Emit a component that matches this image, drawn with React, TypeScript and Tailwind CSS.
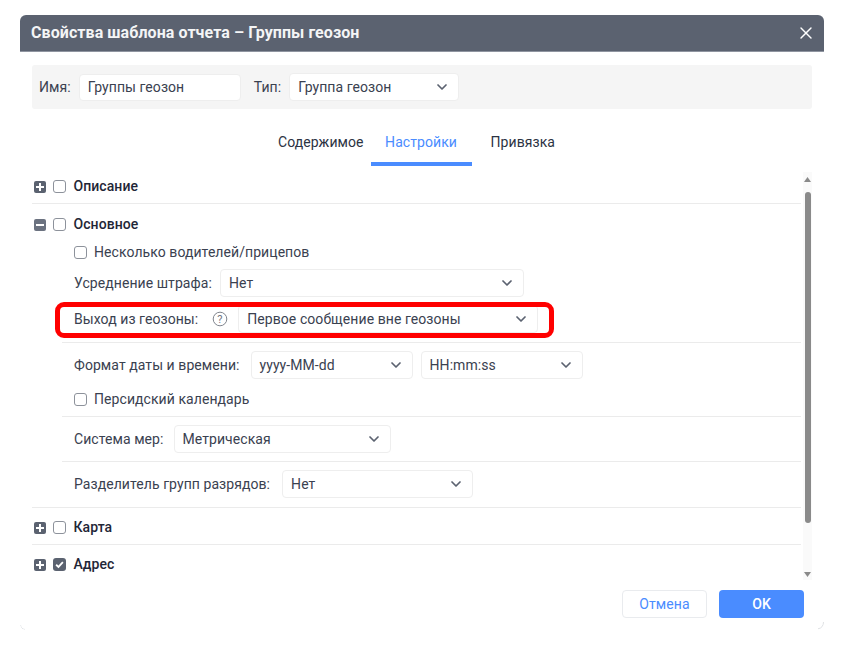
import { ChevronDown, X } from 'lucide-react';

const labelText = 'text-[14px] leading-[20px] text-[#3a4150] whitespace-nowrap';

const Select = ({ value, width }: { value: string; width: string }) => (
  <div
    className={`${width} h-[28px] flex items-center justify-between pl-[8px] pr-[8px] bg-white border border-[#eeeeee] rounded-[4px] text-[14px] text-[#3a4150] shrink-0`}
  >
    <span className="whitespace-nowrap">{value}</span>
    <ChevronDown className="w-[16px] h-[16px] text-[#5b6270]" strokeWidth={2.6} />
  </div>
);

const Checkbox = ({ checked = false }: { checked?: boolean }) =>
  checked ? (
    <div className="w-[13px] h-[13px] rounded-[3px] bg-[#5b6270] flex items-center justify-center shrink-0">
      <svg width="9" height="9" viewBox="0 0 8 8" fill="none">
        <path d="M1 4.2 3.1 6.2 7 1.9" stroke="#fff" strokeWidth="1.6" />
      </svg>
    </div>
  ) : (
    <div className="w-[13px] h-[13px] rounded-[3px] border border-[#8d929b] bg-white shrink-0" />
  );

const Toggle = ({ open = false }: { open?: boolean }) => (
  <div
    className={`w-[12px] h-[12px] rounded-[2px] relative shrink-0 ${open ? 'bg-[#6b7280]' : 'bg-[#5b6270]'}`}
  >
    <div className="absolute left-[2px] top-[5px] w-[8px] h-[2px] bg-white" />
    {!open && <div className="absolute left-[5px] top-[2px] w-[2px] h-[8px] bg-white" />}
  </div>
);

const SectionHeader = ({
  title,
  open,
  checked,
}: {
  title: string;
  open?: boolean;
  checked?: boolean;
}) => (
  <div className="flex items-center h-[20px] pl-[2px]">
    <div className="flex items-center mt-[1px]">
      <Toggle open={open} />
      <div className="ml-[7px]">
        <Checkbox checked={checked} />
      </div>
    </div>
    <span className="ml-[7.5px] text-[14px] font-medium text-[#1f2637]">{title}</span>
  </div>
);

const Divider = () => <div className="h-[1px] bg-[#ebebeb]" />;

export default function App() {
  return (
    <div
      className="w-[842px] h-[645px] bg-white overflow-hidden pt-[15px] pl-[20px] tracking-[0.07px]"
      style={{ fontFamily: 'Roboto, sans-serif' }}
    >
      <div className="relative w-[804px] h-[615px] bg-white rounded-[6px] flex flex-col overflow-hidden">
        <div className="h-[37px] bg-[#5b6270] border-b border-[#8f95a0] flex items-center justify-between pl-[11px] pr-[8.5px] shrink-0">
          <span className="text-[16px] font-bold text-[#f4f5f6]">
            Свойства шаблона отчета – Группы геозон
          </span>
          <X className="w-[20px] h-[20px] text-white" strokeWidth={1.7} />
        </div>

        <div className="mx-[12px] mt-[13px] h-[44px] bg-[#f5f5f5] rounded-[3px] flex items-center pl-[7px] shrink-0">
          <span className={labelText}>Имя:</span>
          <div className="ml-[8px] w-[162px] h-[27px] bg-white border border-[#eeeeee] rounded-[4px] flex items-center pl-[8px] text-[14px] text-[#3a4150]">
            Группы геозон
          </div>
          <span className={`${labelText} ml-[13px]`}>Тип:</span>
          <div className="ml-[8px]">
            <Select value="Группа геозон" width="w-[170px]" />
          </div>
        </div>

        <div className="flex h-[53px] mt-[4px] pl-[258px] shrink-0">
          <div className="pr-[7px] pt-[19px] text-[14px] text-[#2c3343]">Содержимое</div>
          <div className="pt-[19px] h-[53px] text-[14px] text-center text-[#4a8cff] border-b-4 border-[#4a8cff] w-[101px] whitespace-nowrap">
            Настройки
          </div>
          <div className="pl-[19px] pt-[19px] text-[14px] text-[#2c3343]">Привязка</div>
        </div>

        <div className="ml-[12px] mr-[12px] mt-[6px] h-[408px] flex overflow-hidden shrink-0">
          <div className="flex-1 pt-[4px] min-w-0">
            <SectionHeader title="Описание" />
            <div className="mt-[7px]">
              <Divider />
            </div>

            <div className="mt-[10px]">
              <SectionHeader title="Основное" open />
            </div>
            <div className="ml-[42px] mt-[8px] flex items-center gap-[7px]">
              <Checkbox />
              <span className={labelText}>Несколько водителей/прицепов</span>
            </div>
            <div className="ml-[42px] mt-[7px] flex items-center">
              <span className={labelText}>Усреднение штрафа:</span>
              <div className="ml-[8px]">
                <Select value="Нет" width="w-[304px]" />
              </div>
            </div>
            <div className="relative ml-[42px] mt-[8px] flex items-center">
              <span className={labelText}>Выход из геозоны:</span>
              <svg className="ml-[14px]" width="16" height="16" viewBox="0 0 16 16" fill="none">
                <circle cx="8" cy="8" r="6.8" stroke="#80858e" />
                <text x="8" y="11.8" textAnchor="middle" fontSize="11" fill="#70757f">
                  ?
                </text>
              </svg>
              <div className="ml-[10px]">
                <Select value="Первое сообщение вне геозоны" width="w-[300px]" />
              </div>
              <div className="absolute left-[-19px] top-[-3px] w-[499px] h-[36px] border-[5px] border-[#ff0000] rounded-[9px]" />
            </div>
            <div className="ml-[30px] mt-[9px]">
              <Divider />
            </div>
            <div className="ml-[42px] mt-[8px] flex items-center">
              <span className={labelText}>Формат даты и времени:</span>
              <div className="ml-[11px]">
                <Select value="yyyy-MM-dd" width="w-[162px]" />
              </div>
              <div className="ml-[8px]">
                <Select value="HH:mm:ss" width="w-[162px]" />
              </div>
            </div>
            <div className="ml-[42px] mt-[10px] flex items-center gap-[7px]">
              <Checkbox />
              <span className={labelText}>Персидский календарь</span>
            </div>
            <div className="ml-[30px] mt-[7px]">
              <Divider />
            </div>
            <div className="ml-[42px] mt-[8px] flex items-center">
              <span className={labelText}>Система мер:</span>
              <div className="ml-[10px]">
                <Select value="Метрическая" width="w-[217px]" />
              </div>
            </div>
            <div className="ml-[30px] mt-[8px]">
              <Divider />
            </div>
            <div className="ml-[42px] mt-[8px] flex items-center">
              <span className={labelText}>Разделитель групп разрядов:</span>
              <div className="ml-[12px]">
                <Select value="Нет" width="w-[191px]" />
              </div>
            </div>
            <div className="mt-[9px]">
              <Divider />
            </div>
            <div className="mt-[9px]">
              <SectionHeader title="Карта" />
            </div>
            <div className="mt-[7px]">
              <Divider />
            </div>
            <div className="mt-[9px]">
              <SectionHeader title="Адрес" checked />
            </div>
          </div>

          <div className="w-[9px] ml-[2px] bg-[#fafafa] flex flex-col items-center shrink-0">
            <svg className="mt-[5px]" width="7" height="5" viewBox="0 0 7 5">
              <path d="M3.5 0 7 5H0z" fill="#8a8a8a" />
            </svg>
            <div className="w-[6px] h-[331px] mt-[10px] rounded-[3px] bg-[#8a8a8a]" />
            <div className="flex-1" />
            <svg className="mb-[3px]" width="7" height="5" viewBox="0 0 7 5">
              <path d="M0 0h7L3.5 5z" fill="#8a8a8a" />
            </svg>
          </div>
        </div>

        <div className="flex justify-end gap-[12px] pr-[20px] mt-[10px] shrink-0">
          <button className="w-[85px] h-[28px] bg-white border border-[#e9ebee] rounded-[4px] text-[14px] text-[#4a8cff]">
            Отмена
          </button>
          <button className="w-[85px] h-[28px] bg-[#4a8cff] rounded-[4px] text-[14px] font-medium text-white">
            OK
          </button>
        </div>

        <svg className="absolute left-0 bottom-0" width="6" height="6" viewBox="0 0 6 6" fill="none">
          <path d="M.5 1C.8 3.4 2.4 5.2 5 5.5" stroke="#e3e5e8" />
        </svg>
        <svg className="absolute right-0 bottom-0" width="6" height="8" viewBox="0 0 6 8" fill="none">
          <path d="M5.5 0C5.5 3.6 3.6 6.4 0 6.8" stroke="#dfe1e4" />
        </svg>
      </div>
    </div>
  );
}
